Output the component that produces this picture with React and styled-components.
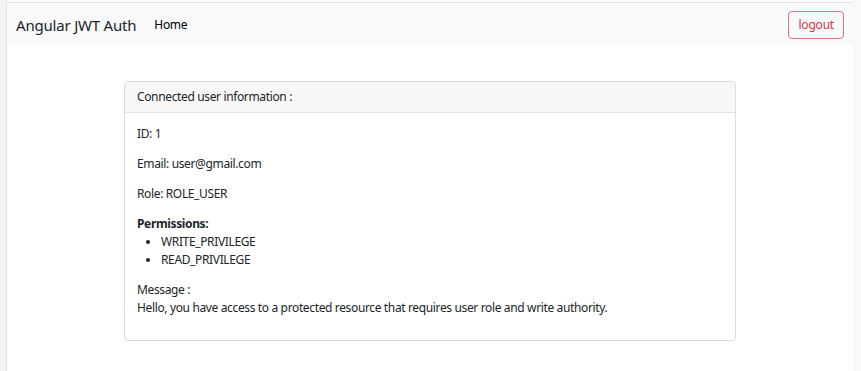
import React from "react";
import styled, { createGlobalStyle } from "styled-components";

const Global = createGlobalStyle`
  html, body { margin: 0; padding: 0; background: #fff; }
  body { font-family: "Noto Sans", "Open Sans", sans-serif; color: #212529; font-size: 12px; line-height: 1.5; letter-spacing: -0.36px; }
  * { box-sizing: border-box; }
`;

const Frame = styled.div`
  display: flex;
  width: 861px;
  height: 371px;
  overflow: hidden;
`;

const LeftEdge = styled.div`
  width: 7px;
  flex: none;
  background: #f4f4f4;
  border-right: 1px solid #e3e3e3;
`;

const RightEdge = styled.div`
  width: 8px;
  flex: none;
  background: #f8f9fb;
`;

const Main = styled.div`
  flex: 1;
  display: flex;
  flex-direction: column;
  padding-top: 2px;
`;

const TopLine = styled.div`
  height: 1px;
  background: #e2e2e2;
`;

const Navbar = styled.nav`
  height: 42px;
  background: #f8f9fa;
  display: flex;
  align-items: center;
  padding: 2px 9px 0 9px;
`;

const Brand = styled.a`
  font-size: 15px;
  color: #212529;
  margin-right: 12px;
  text-decoration: none;
  letter-spacing: -0.2px;
`;

const NavLink = styled.a`
  font-size: 12px;
  color: #000;
  padding: 0 6px;
  text-decoration: none;
`;

const Spacer = styled.div`
  flex: 1;
`;

const OutlineButton = styled.button`
  font-family: inherit;
  font-size: 12px;
  line-height: 18px;
  letter-spacing: -0.2px;
  color: #dc3545;
  background: transparent;
  border: 1px solid #e0727d;
  border-radius: 4px;
  padding: 4px 9px;
  height: 28px;
`;

const Content = styled.div`
  display: flex;
  justify-content: center;
  padding-top: 36px;
`;

const Card = styled.div`
  width: 612px;
  height: 260px;
  border: 1px solid #dcdcdc;
  border-radius: 4px;
  overflow: hidden;
`;

const CardHeader = styled.div`
  height: 31px;
  background: #f7f7f7;
  border-bottom: 1px solid #e2e2e2;
  padding: 0 12px;
  display: flex;
  align-items: center;
`;

const CardBody = styled.div`
  padding: 12px;
`;

const P = styled.p`
  margin: 0 0 12px 0;
`;

const Strong = styled.strong`
  font-weight: 700;
`;

const List = styled.ul`
  margin: 0 0 12px 0;
  padding-left: 24px;
`;

export default function App() {
  return (
    <>
      <Global />
      <Frame>
        <LeftEdge />
        <Main>
          <TopLine />
          <Navbar>
            <Brand>Angular JWT Auth</Brand>
            <NavLink>Home</NavLink>
            <Spacer />
            <OutlineButton>logout</OutlineButton>
          </Navbar>
          <Content>
            <Card>
              <CardHeader>Connected user information :</CardHeader>
              <CardBody>
                <P>ID: 1</P>
                <P>Email: user@gmail.com</P>
                <P>Role: ROLE_USER</P>
                <Strong>Permissions:</Strong>
                <List>
                  <li>WRITE_PRIVILEGE</li>
                  <li>READ_PRIVILEGE</li>
                </List>
                <div>Message :</div>
                <div>Hello, you have access to a protected resource that requires user role and write authority.</div>
              </CardBody>
            </Card>
          </Content>
        </Main>
        <RightEdge />
      </Frame>
    </>
  );
}
